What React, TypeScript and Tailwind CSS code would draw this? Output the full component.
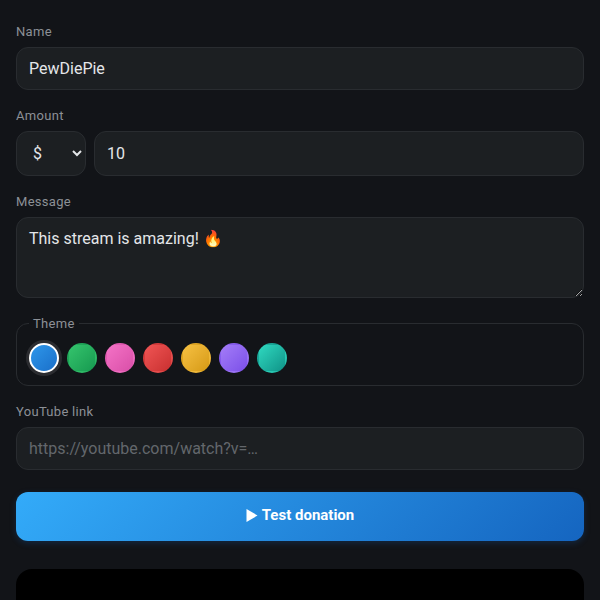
import React from "react";

const swatches = [
  { c: "bg-gradient-to-br from-[#2f97ea] to-[#1a6fc9]", selected: true },
  { c: "bg-gradient-to-br from-[#34c46d] to-[#169a50]" },
  { c: "bg-gradient-to-br from-[#f472c6] to-[#d94fa8]" },
  { c: "bg-gradient-to-br from-[#f05454] to-[#c93030]" },
  { c: "bg-gradient-to-br from-[#f6c141] to-[#d69a12]" },
  { c: "bg-gradient-to-br from-[#a47cf8] to-[#7c4fe8]" },
  { c: "bg-gradient-to-br from-[#2fd9c0] to-[#0f9488]" },
];

const field =
  "block w-full rounded-[12px] border border-[#292c30] bg-[#1c1f22] px-3 text-[16px] text-[#e4e6e9] outline-none placeholder:text-[#63676c] [font-family:Roboto,sans-serif]";
const label = "block h-[16px] text-[13px] leading-[16px] tracking-[0.3px] text-[#8c9096] mb-[7px]";

export default function App() {
  return (
    <div className="h-[600px] overflow-hidden bg-[#121418] px-4 pt-[24px] [color-scheme:dark] [font-family:Roboto,sans-serif]">
      <label className={label}>Name</label>
      <input className={`${field} h-[43px]`} defaultValue="PewDiePie" />

      <label className={`${label} mt-[18px]`}>Amount</label>
      <div className="flex gap-2">
        <select className={`${field} !w-[70px] h-[45px] shrink-0`} defaultValue="$">
          <option>$</option>
        </select>
        <input className={`${field} h-[45px] flex-1`} defaultValue="10" />
      </div>

      <label className={`${label} mt-[18px]`}>Message</label>
      <textarea
        className={`${field} h-[81px] py-[11px] leading-[20px]`}
        defaultValue="This stream is amazing! 🔥"
      />

      <fieldset className="mt-[17px] rounded-[12px] border border-[#292c30] px-3 pb-[12px] pt-[12px]">
        <legend className="h-[16px] px-[4px] text-[13px] leading-[18px] tracking-[0.3px] text-[#8c9096]">Theme</legend>
        <div className="flex gap-2">
          {swatches.map((s, i) => (
            <button
              key={i}
              className={`h-[30px] w-[30px] rounded-full border-2 ${s.c} ${
                s.selected
                  ? "border-white shadow-[0_0_0_3px_#2b2c30]"
                  : "border-transparent"
              }`}
            />
          ))}
        </div>
      </fieldset>

      <label className={`${label} mt-[18px]`}>YouTube link</label>
      <input className={`${field} h-[43px]`} placeholder="https://youtube.com/watch?v=…" />

      <button className="mt-[22px] flex h-[49px] w-full items-center justify-center gap-[4px] rounded-[12px] bg-[linear-gradient(135deg,#33abf9,#1565c0)] pb-[2px] text-[15px] font-bold text-white shadow-[0_2px_6px_rgba(21,101,192,0.25)]">
        <svg width="12" height="13" viewBox="0 0 12 13"><path d="M0.5 0 L11.5 6.5 L0.5 13 Z" fill="#fff" /></svg>
        Test donation
      </button>

      <div className="mt-[28px] h-[200px] rounded-[16px] bg-black" />
    </div>
  );
}
